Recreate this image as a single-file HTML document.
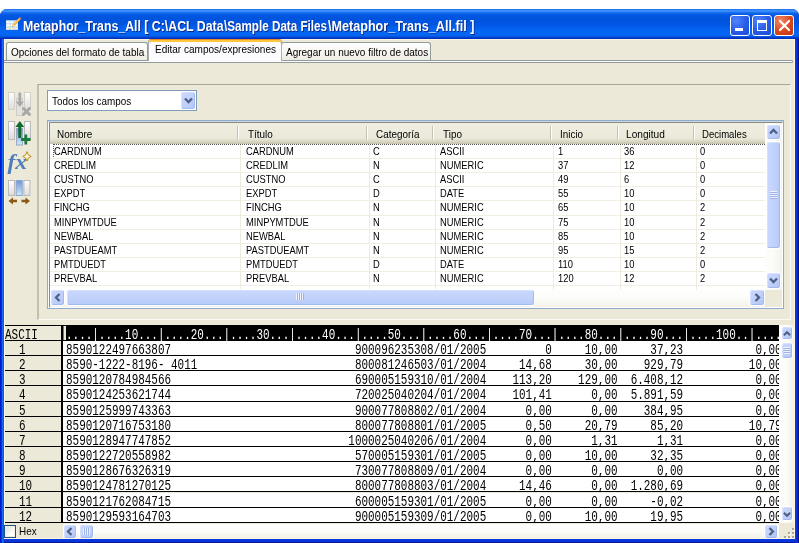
<!DOCTYPE html>
<html lang="es"><head><meta charset="utf-8"><title>Metaphor_Trans_All</title>
<style>
html,body{margin:0;padding:0;}
body{width:799px;height:543px;overflow:hidden;background:#fff;position:relative;font-family:"Liberation Sans","DejaVu Sans",sans-serif;font-size:11px;color:#000;}
.abs{position:absolute;}
#win{position:absolute;left:0;top:9px;width:799px;height:534px;border-radius:7px 7px 0 0;overflow:hidden;background:linear-gradient(90deg,#0019cf 0,#0019cf 1px,#0831d9 1px,#0831d9 2px,#166aee 2px,#166aee 3px,#0d5ddf 3px,#0d5ddf 4px,transparent 4px),linear-gradient(270deg,#00138c 0,#00138c 1px,#0a2ab8 1px,#0a2ab8 2px,#0831d9 2px,#0831d9 3px,#0838e0 3px,#0838e0 4px,transparent 4px),linear-gradient(0deg,#001a9a 0,#001a9a 1px,#0831d9 1px,#0838e0 4px,transparent 4px),#0838e0;}
#title{position:absolute;left:0;top:0;width:799px;height:30px;background:linear-gradient(#0a5fe8 0px,#3d90fb 1px,#3589f8 2.5px,#1068ee 4px,#0458e2 6px,#0053dd 9px,#0055e2 15px,#0360ee 19px,#0468f4 24px,#0464f0 26.5px,#0350dc 28px,#0030c0 29px,#0030c0 30px);}
#ttext{position:absolute;left:22.500px;top:9px;color:#fff;font-weight:bold;font-size:14px;line-height:16px;white-space:nowrap;text-shadow:1px 1px 0 #0a2a8a;}
#ttext span{position:absolute;top:0;white-space:nowrap;transform-origin:0 0;}
#client{position:absolute;left:4px;top:30px;width:791px;height:500px;background:#ece9d8;box-sizing:border-box;border:1px solid #fcf8e0;}
.tab{position:absolute;box-sizing:border-box;border:1px solid #919b9c;border-bottom:none;border-radius:3px 3px 0 0;background:linear-gradient(#ffffff,#f6f5ef 60%,#ecebe4);white-space:nowrap;}
.tab span{position:absolute;top:2px;white-space:nowrap;transform-origin:0 60%;transform:scale(.9,1.05);line-height:13px;}
.tab.act{background:#fcfcfe;border-top:1px solid #e68b2c;border-left-color:#a9b0b2;border-right-color:#a9b0b2;box-shadow:0 2px 0 #ffc73c inset;}
.mono{font-family:"Liberation Mono","DejaVu Sans Mono",monospace;font-size:14px;display:inline-block;transform-origin:0 0;transform:scaleX(0.7815);white-space:nowrap;}
#lv{position:absolute;left:47px;top:120px;width:737px;height:189px;box-sizing:border-box;border:1px solid #8eabca;background:#fff;box-shadow:0 1px 0 #c8d6e6 inset;}
#lvin{position:absolute;left:1px;top:1px;width:732px;height:184px;border:1px solid #8d8b7d;border-right-color:#fff;border-bottom-color:#fff;overflow:hidden;background:#fff;}
.lvrow{position:absolute;left:0;width:715px;height:14.12px;box-sizing:border-box;border-bottom:1px solid #f1efe2;}
.lvrow span{position:absolute;top:0px;line-height:13px;white-space:nowrap;transform-origin:0 60%;transform:scale(.85,1.05);}
.hcell{position:absolute;top:2px;height:20px;box-sizing:border-box;line-height:18px;white-space:nowrap;transform-origin:0 60%;transform:scale(.9,1.05);}
.hsep{position:absolute;top:3px;width:2px;height:14px;border-left:1px solid #c5c2b2;border-right:1px solid #fff;box-sizing:border-box;}
.drow{position:absolute;left:0;width:775px;height:15.15px;box-sizing:border-box;border-bottom:1px solid #000;}
.dnum{position:absolute;left:0;top:0;width:57px;height:100%;background:#ece9d8;}
.dnum .mono{position:absolute;left:15px;top:2px;line-height:14px;}
.dtxt{position:absolute;left:59px;top:0;width:716px;height:100%;background:#fff;overflow:hidden;}
.dtxt .mono{position:absolute;left:3px;top:2px;line-height:14px;}
.sbtn{position:absolute;box-sizing:border-box;border:1px solid #fff;border-radius:3px;background:linear-gradient(135deg,#cbd9fe,#c1d1fb 50%,#b3c5f6);box-shadow:-1px -1px 0 #a3baec inset,1px 1px 0 #d5e0ff inset;}
.tbtn{position:absolute;top:6px;width:20px;height:21px;box-sizing:border-box;border:1px solid #fff;border-radius:3px;background:radial-gradient(circle at 30% 25%,#5084fb,#275ae6 55%,#1b4cd4);}
.tbtn.close{background:radial-gradient(circle at 30% 25%,#f08868,#d8481c 55%,#b83410);}
.gripv{position:absolute;left:3px;top:49px;width:7px;height:8px;background:repeating-linear-gradient(#eef3ff 0,#eef3ff 1px,#9db1e6 1px,#9db1e6 2px);}
.griph{position:absolute;left:229px;top:3px;width:8px;height:7px;background:repeating-linear-gradient(90deg,#eef3ff 0,#eef3ff 1px,#9db1e6 1px,#9db1e6 2px);}

.tab span,.hcell,.lvrow span,.mono,.gs{filter:grayscale(1);}

.thumbh{background:linear-gradient(#cad8fe,#c2d2fb 50%,#b7c9f7);}
.thumbv{background:linear-gradient(90deg,#cad8fe,#c2d2fb 50%,#b7c9f7);}

</style></head>
<body>
<div id="win">
 <div id="title">
  <svg class="abs" style="left:5px;top:7px" width="18" height="16" viewBox="5 16 18 16"><rect x="6" y="20" width="12" height="10" fill="#bcd8f4"/><rect x="6" y="20" width="12" height="1" fill="#9cc4ec"/><g fill="#fff"><rect x="6.500" y="21.300" width="3" height="2"/><rect x="10.500" y="21.300" width="3" height="2"/><rect x="14.500" y="21.300" width="3" height="2"/><rect x="6.500" y="24.300" width="3" height="2"/><rect x="10.500" y="24.300" width="3" height="2"/><rect x="14.500" y="24.300" width="3" height="2"/></g><g fill="#fdebc8"><rect x="6.500" y="27.300" width="3" height="2"/><rect x="10.500" y="27.300" width="3" height="2"/><rect x="14.500" y="27.300" width="3" height="2"/></g><path d="M12.200 26.800l.7-2.600 6.200-6.400 1.700 1.500-6.200 6.500z" fill="#f0a428"/><path d="M13.300 24.600l5.900-6.200.6.500-5.900 6.200z" fill="#ffd874"/><path d="M12.200 26.800l.7-2.600 1.700 1.500z" fill="#f6e4b4"/><path d="M12.200 26.800l.3-1 .7.600z" fill="#6a4a2a"/><path d="M19.100 17.800l.8-.8 1.700 1.500-.8.800z" fill="#d87868"/></svg>
  <div id="ttext"><span style="left:0;transform:scaleX(.881)">Metaphor_Trans_All [ C:\ACL Data</span><span style="left:201.300px;transform:scaleX(.833)">\Sample Data Files</span><span style="left:305.500px;transform:scaleX(.9)">\Metaphor_Trans_All.fil ]</span></div>
  <div class="tbtn" style="left:730px"><div class="abs" style="left:4px;top:12px;width:8px;height:3px;background:#fff"></div></div>
  <div class="tbtn" style="left:752px"><div class="abs" style="left:4px;top:4px;width:10px;height:11px;box-sizing:border-box;border:1px solid #fff;border-top-width:3px"></div></div>
  <div class="tbtn close" style="left:774px"><svg class="abs" style="left:0.500px;top:0" width="17" height="19" viewBox="0 0 17 19"><path d="M4 5l9 9M13 5l-9 9" stroke="#fff" stroke-width="2.2" stroke-linecap="round"/></svg></div>
 </div>
 <div id="client"></div>
</div>

<!-- tabs (page coordinates) -->
<div class="abs" style="left:4px;top:60px;width:789px;height:3px;box-sizing:border-box;border:1px solid #919b9c;border-left:none;border-radius:0 2px 2px 0;background:#fcfcfe"></div>
<div class="tab" style="left:6px;top:42px;width:142px;height:18px"><span style="left:4px;top:2.500px;transform:scale(.908,1.05)">Opciones del formato de tabla</span></div>
<div class="tab" style="left:281px;top:42px;width:150px;height:18px"><span style="left:4px;top:2.500px;transform:scale(.908,1.05)">Agregar un nuevo filtro de datos</span></div>
<div class="tab act" style="left:148px;top:39px;width:134px;height:22px"><span style="left:6px;top:3px;transform:scale(.912,1.05)">Editar campos/expresiones</span></div>

<!-- panel -->
<div class="abs" style="left:37px;top:84px;width:754px;height:236px;box-sizing:border-box;border:1px solid #aca899;border-left:2px solid #c3c0ae;border-right-color:#fbfaf4;border-bottom-color:#fbfaf4;background:#ece9d8"></div>

<!-- toolbar icons -->
<svg class="abs" style="left:4px;top:86px;opacity:.999" width="34" height="124" viewBox="4 86 34 124">
 <defs>
  <linearGradient id="gcol" x1="0" y1="0" x2="0" y2="1"><stop offset="0" stop-color="#ffffff"/><stop offset="1" stop-color="#dcdcdc"/></linearGradient>
  <linearGradient id="gblue" x1="0" y1="0" x2="0" y2="1"><stop offset="0" stop-color="#6d96d8"/><stop offset="1" stop-color="#cfeafa"/></linearGradient>
 </defs>
 <!-- icon 1 disabled -->
 <rect x="8.5" y="92.5" width="6" height="17" fill="url(#gcol)" stroke="#d2d0c6"/>
 <rect x="24.5" y="92.5" width="6" height="17" fill="url(#gcol)" stroke="#d2d0c6"/>
 <rect x="16.5" y="98.5" width="6" height="17" fill="#e4e3e0" stroke="#cfcdc4"/>
 <path d="M18.4 92.5h2.8v9h2.6l-4 5.5-4-5.5h2.6z" fill="#a9a9a9"/>
 <path d="M23.500 108.500l6 6M29.500 108.500l-6 6" stroke="#a8a8a8" stroke-width="3" stroke-linecap="round"/>
 <!-- icon 2 -->
 <rect x="8.5" y="121.5" width="6" height="18" fill="url(#gcol)" stroke="#b9b9b9"/>
 <rect x="24.5" y="121.5" width="6" height="18" fill="url(#gcol)" stroke="#b9b9b9"/>
 <rect x="16.5" y="128.5" width="6" height="16.5" fill="url(#gblue)" stroke="#9aa8c0"/>
 <path d="M19.8 121l4.4 6h-2.9v11h-3v-11h-2.9z" fill="#0e6a32"/>
 <path d="M25.8 134.6v9.8M21 139.5h9.6" stroke="#1d7a3a" stroke-width="2.8"/>
 <!-- icon 3 fx -->
 <text x="7.500" y="169" font-family="Liberation Serif, DejaVu Serif, serif" font-style="italic" font-weight="bold" font-size="22" fill="#4f7db9" textLength="19.500" lengthAdjust="spacingAndGlyphs">fx</text>
 <path d="M27 151.6q.6 4 4.2 4.8q-3.6.8-4.2 4.8q-.6-4-4.2-4.8q3.600-.8 4.200-4.800z" fill="#fbf3d4" stroke="#b98a1e" stroke-width="1"/>
 <!-- icon 4 -->
 <rect x="8.500" y="180.500" width="6" height="15" fill="url(#gcol)" stroke="#b9b9b9"/>
 <rect x="16.200" y="180.500" width="6" height="15" fill="url(#gblue)" stroke="#8ea6cc"/>
 <rect x="23.900" y="180.500" width="6" height="15" fill="url(#gcol)" stroke="#b9b9b9"/>
 <path d="M8.500 201l4.500-3.600v2.400h4v2.400h-4v2.400z" fill="#8a5a14"/>
 <path d="M30 201l-4.500-3.600v2.400h-4v2.400h4v2.400z" fill="#8a5a14"/>
</svg>

<!-- combo -->
<div class="abs" style="left:47px;top:90px;width:150px;height:21px;box-sizing:border-box;border:1px solid #7f9db9;background:#fff">
 <span class="abs gs" style="left:4px;top:4px;white-space:nowrap;transform-origin:0 60%;transform:scale(.9,1.05);line-height:13px">Todos los campos</span>
 <div class="sbtn" style="left:132px;top:0;width:16px;height:19px"><svg class="abs" style="left:2.500px;top:5px" width="9" height="7" viewBox="0 0 9 7"><path d="M1 1.500l3.500 3.500 3.500-3.500" fill="none" stroke="#4d6185" stroke-width="2.3"/></svg></div>
</div>

<!-- list view -->
<div id="lv"><div id="lvin">
 <div class="abs" style="left:0;top:0;width:715px;height:21px;background:linear-gradient(#f0eee1 0,#ebe9da 15px,#e2dfcd 17px,#d6d2c0 19px,#c5c1ae 21px)">
  <div class="hcell" style="left:7px">Nombre</div>
  <div class="hcell" style="left:198px">Título</div>
  <div class="hcell" style="left:326px">Categoría</div>
  <div class="hcell" style="left:393px">Tipo</div>
  <div class="hcell" style="left:510px">Inicio</div>
  <div class="hcell" style="left:576px;transform:scale(.92,1.05)">Longitud</div>
  <div class="hcell" style="left:652px;transform:scale(.87,1.05)">Decimales</div>
  <div class="hsep" style="left:187px"></div><div class="hsep" style="left:316px"></div><div class="hsep" style="left:382px"></div><div class="hsep" style="left:500px"></div><div class="hsep" style="left:567px"></div><div class="hsep" style="left:643px"></div>
 </div>
 <div class="abs" style="left:0;top:21px;width:715px;height:146px;overflow:hidden">
<div class="lvrow" style="top:1.00px"><span style="left:4px">CARDNUM</span><span style="left:196px">CARDNUM</span><span style="left:323px">C</span><span style="left:390px">ASCII</span><span style="left:508px">1</span><span style="left:574px">36</span><span style="left:650px">0</span></div>
<div class="lvrow" style="top:15.12px"><span style="left:4px">CREDLIM</span><span style="left:196px">CREDLIM</span><span style="left:323px">N</span><span style="left:390px">NUMERIC</span><span style="left:508px">37</span><span style="left:574px">12</span><span style="left:650px">0</span></div>
<div class="lvrow" style="top:29.24px"><span style="left:4px">CUSTNO</span><span style="left:196px">CUSTNO</span><span style="left:323px">C</span><span style="left:390px">ASCII</span><span style="left:508px">49</span><span style="left:574px">6</span><span style="left:650px">0</span></div>
<div class="lvrow" style="top:43.36px"><span style="left:4px">EXPDT</span><span style="left:196px">EXPDT</span><span style="left:323px">D</span><span style="left:390px">DATE</span><span style="left:508px">55</span><span style="left:574px">10</span><span style="left:650px">0</span></div>
<div class="lvrow" style="top:57.48px"><span style="left:4px">FINCHG</span><span style="left:196px">FINCHG</span><span style="left:323px">N</span><span style="left:390px">NUMERIC</span><span style="left:508px">65</span><span style="left:574px">10</span><span style="left:650px">2</span></div>
<div class="lvrow" style="top:71.60px"><span style="left:4px">MINPYMTDUE</span><span style="left:196px">MINPYMTDUE</span><span style="left:323px">N</span><span style="left:390px">NUMERIC</span><span style="left:508px">75</span><span style="left:574px">10</span><span style="left:650px">2</span></div>
<div class="lvrow" style="top:85.72px"><span style="left:4px">NEWBAL</span><span style="left:196px">NEWBAL</span><span style="left:323px">N</span><span style="left:390px">NUMERIC</span><span style="left:508px">85</span><span style="left:574px">10</span><span style="left:650px">2</span></div>
<div class="lvrow" style="top:99.84px"><span style="left:4px">PASTDUEAMT</span><span style="left:196px">PASTDUEAMT</span><span style="left:323px">N</span><span style="left:390px">NUMERIC</span><span style="left:508px">95</span><span style="left:574px">15</span><span style="left:650px">2</span></div>
<div class="lvrow" style="top:113.96px"><span style="left:4px">PMTDUEDT</span><span style="left:196px">PMTDUEDT</span><span style="left:323px">D</span><span style="left:390px">DATE</span><span style="left:508px">110</span><span style="left:574px">10</span><span style="left:650px">0</span></div>
<div class="lvrow" style="top:128.08px"><span style="left:4px">PREVBAL</span><span style="left:196px">PREVBAL</span><span style="left:323px">N</span><span style="left:390px">NUMERIC</span><span style="left:508px">120</span><span style="left:574px">12</span><span style="left:650px">2</span></div>
  <div class="abs" style="left:190px;top:0;width:1px;height:146px;background:#efecdf"></div><div class="abs" style="left:319px;top:0;width:1px;height:146px;background:#efecdf"></div><div class="abs" style="left:385px;top:0;width:1px;height:146px;background:#efecdf"></div><div class="abs" style="left:503px;top:0;width:1px;height:146px;background:#efecdf"></div><div class="abs" style="left:570px;top:0;width:1px;height:146px;background:#efecdf"></div><div class="abs" style="left:646px;top:0;width:1px;height:146px;background:#efecdf"></div>
  <div class="abs" style="left:3px;top:0;width:712px;height:0;border-top:1px dotted #555"></div><div class="abs" style="left:3px;top:0;width:0;height:13px;border-left:1px dotted #555"></div>
 </div>
 <!-- v scrollbar -->
 <div class="abs" style="left:715px;top:0;width:17px;height:167px;background:linear-gradient(90deg,#fefefd,#fbfbf8 50%,#f4f2e9)"></div>
 <div class="sbtn" style="left:716px;top:1px;width:15px;height:16px"><svg class="abs" style="left:2px;top:3px" width="9" height="7" viewBox="0 0 9 7"><path d="M1 5.500l3.500-3.500 3.500 3.500" fill="none" stroke="#4d6185" stroke-width="2.3"/></svg></div>
 <div class="sbtn thumbv" style="left:716px;top:18px;width:15px;height:108px"><div class="gripv"></div></div>
 <div class="sbtn" style="left:716px;top:149px;width:15px;height:17px"><svg class="abs" style="left:2px;top:4px" width="9" height="7" viewBox="0 0 9 7"><path d="M1 1.500l3.500 3.500 3.500-3.500" fill="none" stroke="#4d6185" stroke-width="2.3"/></svg></div>
 <!-- h scrollbar -->
 <div class="abs" style="left:0;top:167px;width:715px;height:17px;background:linear-gradient(#fefefd,#fbfbf8 50%,#f4f2e9)"></div>
 <div class="abs" style="left:715px;top:167px;width:17px;height:17px;background:#ece9d8"></div>
 <div class="sbtn" style="left:0px;top:166px;width:15px;height:17px"><svg class="abs" style="left:3px;top:3px" width="7" height="9" viewBox="0 0 7 9"><path d="M5.500 1l-3.500 3.500 3.500 3.500" fill="none" stroke="#4d6185" stroke-width="2.3"/></svg></div>
 <div class="sbtn thumbh" style="left:16px;top:166px;width:469px;height:17px"><div class="griph"></div></div>
 <div class="sbtn" style="left:699px;top:166px;width:16px;height:17px"><svg class="abs" style="left:4px;top:3px" width="7" height="9" viewBox="0 0 7 9"><path d="M1.500 1l3.500 3.500-3.500 3.500" fill="none" stroke="#4d6185" stroke-width="2.3"/></svg></div>
</div></div>

<!-- data view -->
<div class="abs" style="left:5px;top:325px;width:789px;height:213px;overflow:hidden"><div class="abs" style="left:-1px;top:0;width:791px;height:214px;background:#ece9d8">
 <div class="abs" style="left:0;top:0;width:775px;height:1px;background:#000"></div>
 <div class="abs" style="left:57px;top:0;width:2px;height:198px;background:#000"></div>
 <div class="abs" style="left:0;top:1px;width:57px;height:15px;border-bottom:1px solid #000;box-sizing:border-box"><span class="mono" style="position:absolute;left:1px;top:2px;line-height:14px">ASCII</span></div>
 <div class="abs" style="left:59px;top:1px;width:716px;height:15px;background:#000;overflow:hidden"><div class="abs" style="left:0;top:0;width:1px;height:14px;background:#77756c"></div><div class="abs" style="left:1px;top:0px;width:2px;height:14px;background:#ece9d8"></div><span class="mono" style="position:absolute;left:3px;top:2px;color:#fff;line-height:14px">....|....10...|....20...|....30...|....40...|....50...|....60...|....70...|....80...|....90...|....100..|....</span></div>
 <div class="abs" style="left:0;top:1px;width:775px;height:197px;overflow:hidden">
<div class="drow" style="top:15.00px"><div class="dnum"><span class="mono">1</span></div><div class="dtxt"><span class="mono">8590122497663807&nbsp;&nbsp;&nbsp;&nbsp;&nbsp;&nbsp;&nbsp;&nbsp;&nbsp;&nbsp;&nbsp;&nbsp;&nbsp;&nbsp;&nbsp;&nbsp;&nbsp;&nbsp;&nbsp;&nbsp;&nbsp;&nbsp;&nbsp;&nbsp;&nbsp;&nbsp;&nbsp;&nbsp;900096235308/01/2005&nbsp;&nbsp;&nbsp;&nbsp;&nbsp;&nbsp;&nbsp;&nbsp;&nbsp;0&nbsp;&nbsp;&nbsp;&nbsp;&nbsp;10,00&nbsp;&nbsp;&nbsp;&nbsp;&nbsp;37,23&nbsp;&nbsp;&nbsp;&nbsp;&nbsp;&nbsp;&nbsp;&nbsp;&nbsp;&nbsp;&nbsp;0,00</span></div></div>
<div class="drow" style="top:30.15px"><div class="dnum"><span class="mono">2</span></div><div class="dtxt"><span class="mono">8590-1222-8196-&nbsp;4011&nbsp;&nbsp;&nbsp;&nbsp;&nbsp;&nbsp;&nbsp;&nbsp;&nbsp;&nbsp;&nbsp;&nbsp;&nbsp;&nbsp;&nbsp;&nbsp;&nbsp;&nbsp;&nbsp;&nbsp;&nbsp;&nbsp;&nbsp;&nbsp;800081246503/01/2004&nbsp;&nbsp;&nbsp;&nbsp;&nbsp;14,68&nbsp;&nbsp;&nbsp;&nbsp;&nbsp;30,00&nbsp;&nbsp;&nbsp;&nbsp;929,79&nbsp;&nbsp;&nbsp;&nbsp;&nbsp;&nbsp;&nbsp;&nbsp;&nbsp;&nbsp;10,00</span></div></div>
<div class="drow" style="top:45.30px"><div class="dnum"><span class="mono">3</span></div><div class="dtxt"><span class="mono">8590120784984566&nbsp;&nbsp;&nbsp;&nbsp;&nbsp;&nbsp;&nbsp;&nbsp;&nbsp;&nbsp;&nbsp;&nbsp;&nbsp;&nbsp;&nbsp;&nbsp;&nbsp;&nbsp;&nbsp;&nbsp;&nbsp;&nbsp;&nbsp;&nbsp;&nbsp;&nbsp;&nbsp;&nbsp;690005159310/01/2004&nbsp;&nbsp;&nbsp;&nbsp;113,20&nbsp;&nbsp;&nbsp;&nbsp;129,00&nbsp;&nbsp;6.408,12&nbsp;&nbsp;&nbsp;&nbsp;&nbsp;&nbsp;&nbsp;&nbsp;&nbsp;&nbsp;&nbsp;0,00</span></div></div>
<div class="drow" style="top:60.45px"><div class="dnum"><span class="mono">4</span></div><div class="dtxt"><span class="mono">8590124253621744&nbsp;&nbsp;&nbsp;&nbsp;&nbsp;&nbsp;&nbsp;&nbsp;&nbsp;&nbsp;&nbsp;&nbsp;&nbsp;&nbsp;&nbsp;&nbsp;&nbsp;&nbsp;&nbsp;&nbsp;&nbsp;&nbsp;&nbsp;&nbsp;&nbsp;&nbsp;&nbsp;&nbsp;720025040204/01/2004&nbsp;&nbsp;&nbsp;&nbsp;101,41&nbsp;&nbsp;&nbsp;&nbsp;&nbsp;&nbsp;0,00&nbsp;&nbsp;5.891,59&nbsp;&nbsp;&nbsp;&nbsp;&nbsp;&nbsp;&nbsp;&nbsp;&nbsp;&nbsp;&nbsp;0,00</span></div></div>
<div class="drow" style="top:75.60px"><div class="dnum"><span class="mono">5</span></div><div class="dtxt"><span class="mono">8590125999743363&nbsp;&nbsp;&nbsp;&nbsp;&nbsp;&nbsp;&nbsp;&nbsp;&nbsp;&nbsp;&nbsp;&nbsp;&nbsp;&nbsp;&nbsp;&nbsp;&nbsp;&nbsp;&nbsp;&nbsp;&nbsp;&nbsp;&nbsp;&nbsp;&nbsp;&nbsp;&nbsp;&nbsp;900077808802/01/2004&nbsp;&nbsp;&nbsp;&nbsp;&nbsp;&nbsp;0,00&nbsp;&nbsp;&nbsp;&nbsp;&nbsp;&nbsp;0,00&nbsp;&nbsp;&nbsp;&nbsp;384,95&nbsp;&nbsp;&nbsp;&nbsp;&nbsp;&nbsp;&nbsp;&nbsp;&nbsp;&nbsp;&nbsp;0,00</span></div></div>
<div class="drow" style="top:90.75px"><div class="dnum"><span class="mono">6</span></div><div class="dtxt"><span class="mono">8590120716753180&nbsp;&nbsp;&nbsp;&nbsp;&nbsp;&nbsp;&nbsp;&nbsp;&nbsp;&nbsp;&nbsp;&nbsp;&nbsp;&nbsp;&nbsp;&nbsp;&nbsp;&nbsp;&nbsp;&nbsp;&nbsp;&nbsp;&nbsp;&nbsp;&nbsp;&nbsp;&nbsp;&nbsp;800077808801/01/2005&nbsp;&nbsp;&nbsp;&nbsp;&nbsp;&nbsp;0,50&nbsp;&nbsp;&nbsp;&nbsp;&nbsp;20,79&nbsp;&nbsp;&nbsp;&nbsp;&nbsp;85,20&nbsp;&nbsp;&nbsp;&nbsp;&nbsp;&nbsp;&nbsp;&nbsp;&nbsp;&nbsp;10,79</span></div></div>
<div class="drow" style="top:105.90px"><div class="dnum"><span class="mono">7</span></div><div class="dtxt"><span class="mono">8590128947747852&nbsp;&nbsp;&nbsp;&nbsp;&nbsp;&nbsp;&nbsp;&nbsp;&nbsp;&nbsp;&nbsp;&nbsp;&nbsp;&nbsp;&nbsp;&nbsp;&nbsp;&nbsp;&nbsp;&nbsp;&nbsp;&nbsp;&nbsp;&nbsp;&nbsp;&nbsp;&nbsp;1000025040206/01/2004&nbsp;&nbsp;&nbsp;&nbsp;&nbsp;&nbsp;0,00&nbsp;&nbsp;&nbsp;&nbsp;&nbsp;&nbsp;1,31&nbsp;&nbsp;&nbsp;&nbsp;&nbsp;&nbsp;1,31&nbsp;&nbsp;&nbsp;&nbsp;&nbsp;&nbsp;&nbsp;&nbsp;&nbsp;&nbsp;&nbsp;0,00</span></div></div>
<div class="drow" style="top:121.05px"><div class="dnum"><span class="mono">8</span></div><div class="dtxt"><span class="mono">8590122720558982&nbsp;&nbsp;&nbsp;&nbsp;&nbsp;&nbsp;&nbsp;&nbsp;&nbsp;&nbsp;&nbsp;&nbsp;&nbsp;&nbsp;&nbsp;&nbsp;&nbsp;&nbsp;&nbsp;&nbsp;&nbsp;&nbsp;&nbsp;&nbsp;&nbsp;&nbsp;&nbsp;&nbsp;570005159301/01/2005&nbsp;&nbsp;&nbsp;&nbsp;&nbsp;&nbsp;0,00&nbsp;&nbsp;&nbsp;&nbsp;&nbsp;10,00&nbsp;&nbsp;&nbsp;&nbsp;&nbsp;32,35&nbsp;&nbsp;&nbsp;&nbsp;&nbsp;&nbsp;&nbsp;&nbsp;&nbsp;&nbsp;&nbsp;0,00</span></div></div>
<div class="drow" style="top:136.20px"><div class="dnum"><span class="mono">9</span></div><div class="dtxt"><span class="mono">8590128676326319&nbsp;&nbsp;&nbsp;&nbsp;&nbsp;&nbsp;&nbsp;&nbsp;&nbsp;&nbsp;&nbsp;&nbsp;&nbsp;&nbsp;&nbsp;&nbsp;&nbsp;&nbsp;&nbsp;&nbsp;&nbsp;&nbsp;&nbsp;&nbsp;&nbsp;&nbsp;&nbsp;&nbsp;730077808809/01/2004&nbsp;&nbsp;&nbsp;&nbsp;&nbsp;&nbsp;0,00&nbsp;&nbsp;&nbsp;&nbsp;&nbsp;&nbsp;0,00&nbsp;&nbsp;&nbsp;&nbsp;&nbsp;&nbsp;0,00&nbsp;&nbsp;&nbsp;&nbsp;&nbsp;&nbsp;&nbsp;&nbsp;&nbsp;&nbsp;&nbsp;0,00</span></div></div>
<div class="drow" style="top:151.35px"><div class="dnum"><span class="mono">10</span></div><div class="dtxt"><span class="mono">8590124781270125&nbsp;&nbsp;&nbsp;&nbsp;&nbsp;&nbsp;&nbsp;&nbsp;&nbsp;&nbsp;&nbsp;&nbsp;&nbsp;&nbsp;&nbsp;&nbsp;&nbsp;&nbsp;&nbsp;&nbsp;&nbsp;&nbsp;&nbsp;&nbsp;&nbsp;&nbsp;&nbsp;&nbsp;800077808803/01/2004&nbsp;&nbsp;&nbsp;&nbsp;&nbsp;14,46&nbsp;&nbsp;&nbsp;&nbsp;&nbsp;&nbsp;0,00&nbsp;&nbsp;1.280,69&nbsp;&nbsp;&nbsp;&nbsp;&nbsp;&nbsp;&nbsp;&nbsp;&nbsp;&nbsp;&nbsp;0,00</span></div></div>
<div class="drow" style="top:166.50px"><div class="dnum"><span class="mono">11</span></div><div class="dtxt"><span class="mono">8590121762084715&nbsp;&nbsp;&nbsp;&nbsp;&nbsp;&nbsp;&nbsp;&nbsp;&nbsp;&nbsp;&nbsp;&nbsp;&nbsp;&nbsp;&nbsp;&nbsp;&nbsp;&nbsp;&nbsp;&nbsp;&nbsp;&nbsp;&nbsp;&nbsp;&nbsp;&nbsp;&nbsp;&nbsp;600005159301/01/2005&nbsp;&nbsp;&nbsp;&nbsp;&nbsp;&nbsp;0,00&nbsp;&nbsp;&nbsp;&nbsp;&nbsp;&nbsp;0,00&nbsp;&nbsp;&nbsp;&nbsp;&nbsp;-0,02&nbsp;&nbsp;&nbsp;&nbsp;&nbsp;&nbsp;&nbsp;&nbsp;&nbsp;&nbsp;&nbsp;0,00</span></div></div>
<div class="drow" style="top:181.65px"><div class="dnum"><span class="mono">12</span></div><div class="dtxt"><span class="mono">8590129593164703&nbsp;&nbsp;&nbsp;&nbsp;&nbsp;&nbsp;&nbsp;&nbsp;&nbsp;&nbsp;&nbsp;&nbsp;&nbsp;&nbsp;&nbsp;&nbsp;&nbsp;&nbsp;&nbsp;&nbsp;&nbsp;&nbsp;&nbsp;&nbsp;&nbsp;&nbsp;&nbsp;&nbsp;900005159309/01/2005&nbsp;&nbsp;&nbsp;&nbsp;&nbsp;&nbsp;0,00&nbsp;&nbsp;&nbsp;&nbsp;&nbsp;10,00&nbsp;&nbsp;&nbsp;&nbsp;&nbsp;19,95&nbsp;&nbsp;&nbsp;&nbsp;&nbsp;&nbsp;&nbsp;&nbsp;&nbsp;&nbsp;&nbsp;0,00</span></div></div>
 </div>
 <!-- v scrollbar -->
 <div class="abs" style="left:775px;top:0;width:16px;height:198px;background:linear-gradient(90deg,#fefefd,#fbfbf8 50%,#f1efe4)"></div>
 <div class="sbtn" style="left:777px;top:1px;width:12px;height:14px"><svg class="abs" style="left:1px;top:2.500px" width="8" height="7" viewBox="0 0 9 7"><path d="M1 5.500l3.500-3.500 3.500 3.500" fill="none" stroke="#4d6185" stroke-width="2.3"/></svg></div>
 <div class="sbtn" style="left:777px;top:17px;width:12px;height:17px"><div class="abs" style="left:2px;top:4px;width:6px;height:7px;background:repeating-linear-gradient(#eef3ff 0,#eef3ff 1px,#9db1e6 1px,#9db1e6 2px)"></div></div>
 <div class="sbtn" style="left:777px;top:181px;width:12px;height:15px"><svg class="abs" style="left:1px;top:3.500px" width="8" height="7" viewBox="0 0 9 7"><path d="M1 1.500l3.500 3.500 3.500-3.500" fill="none" stroke="#4d6185" stroke-width="2.3"/></svg></div>
 <!-- bottom bar -->
 
 <span class="abs gs" style="left:15px;top:200px;white-space:nowrap;transform-origin:0 60%;transform:scale(.9,1.05);line-height:13px">Hex</span>
 <div class="abs" style="left:59px;top:199px;width:716px;height:15px;background:linear-gradient(#fefefd,#fbfbf8 50%,#f1efe4)"></div>
 <div class="sbtn" style="left:59px;top:199px;width:14px;height:15px"><svg class="abs" style="left:2px;top:2px" width="7" height="9" viewBox="0 0 7 9"><path d="M5.500 1l-3.500 3.500 3.500 3.500" fill="none" stroke="#4d6185" stroke-width="2.3"/></svg></div>
 <div class="sbtn" style="left:75px;top:199px;width:15px;height:15px"><div class="abs" style="left:3px;top:3px;width:7px;height:7px;background:repeating-linear-gradient(90deg,#eef3ff 0,#eef3ff 1px,#9db1e6 1px,#9db1e6 2px)"></div></div>
 <div class="sbtn" style="left:760px;top:199px;width:14px;height:15px"><svg class="abs" style="left:3px;top:2px" width="7" height="9" viewBox="0 0 7 9"><path d="M1.500 1l3.500 3.500-3.500 3.500" fill="none" stroke="#4d6185" stroke-width="2.3"/></svg></div>
 <svg class="abs" style="left:780px;top:202px" width="12" height="12" viewBox="0 0 12 12"><g fill="#fff"><rect x="9" y="2" width="2" height="2"/><rect x="5" y="6" width="2" height="2"/><rect x="9" y="6" width="2" height="2"/><rect x="1" y="10" width="2" height="2"/><rect x="5" y="10" width="2" height="2"/><rect x="9" y="10" width="2" height="2"/></g><g fill="#aaa695"><rect x="8" y="1" width="2" height="2"/><rect x="4" y="5" width="2" height="2"/><rect x="8" y="5" width="2" height="2"/><rect x="0" y="9" width="2" height="2"/><rect x="4" y="9" width="2" height="2"/><rect x="8" y="9" width="2" height="2"/></g></svg>
</div></div>
<div class="abs" style="left:4px;top:525px;width:12px;height:13px;box-sizing:border-box;border:1px solid #1c5180;background:linear-gradient(135deg,#dcdcd6,#fff 70%);box-shadow:0 0 0 1px #f3f1e6 inset"></div>

</body></html>
